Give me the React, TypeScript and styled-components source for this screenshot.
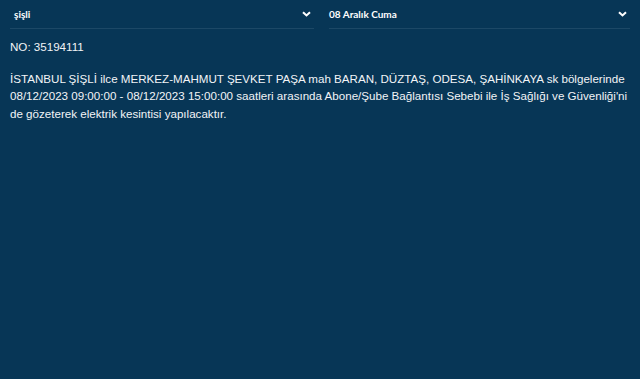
import { createGlobalStyle, styled } from "styled-components";

const GlobalStyle = createGlobalStyle`
  html, body {
    margin: 0;
    padding: 0;
    background: #073656;
  }
`;

const Page = styled.div`
  width: 640px;
  height: 379px;
  background: #073656;
  color: #f2f4f6;
  overflow: hidden;
`;

const Filters = styled.div`
  display: grid;
  grid-template-columns: 304px 301px;
  column-gap: 15px;
  padding: 0 12px 0 10px;
`;

const Select = styled.div<{ $pad: number }>`
  display: flex;
  align-items: center;
  justify-content: space-between;
  height: 28px;
  padding: 0 3px 0 ${(p) => p.$pad}px;
  border-bottom: 1px solid #1c4866;
  font-family: Lato, "Liberation Sans", sans-serif;
  font-weight: 700;
  font-size: 10px;
  color: #ffffff;
`;

const Body = styled.div`
  padding: 9px 10px 0 10px;
  font-family: "Liberation Sans", Arial, sans-serif;
  font-size: 11.6px;
  line-height: 17.5px;
  white-space: nowrap;
`;

const Number = styled.p`
  margin: 0 0 14px;
`;

const Notice = styled.p`
  margin: 0;
`;

function Chevron() {
  return (
    <svg width="9" height="6" viewBox="0 0 9 6">
      <path d="M1 1.2 L4.5 4.5 L8 1.2" fill="none" stroke="#ffffff" strokeWidth="2" />
    </svg>
  );
}

export default function App() {
  return (
    <Page>
      <GlobalStyle />
      <Filters>
        <Select $pad={4}>
          <span>şişli</span>
          <Chevron />
        </Select>
        <Select $pad={0}>
          <span>08 Aralık Cuma</span>
          <Chevron />
        </Select>
      </Filters>
      <Body>
        <Number>NO: 35194111</Number>
        <Notice>
          İSTANBUL ŞİŞLİ ilce MERKEZ-MAHMUT ŞEVKET PAŞA mah BARAN, DÜZTAŞ, ODESA, ŞAHİNKAYA sk bölgelerinde
          <br />
          08/12/2023 09:00:00 - 08/12/2023 15:00:00 saatleri arasında Abone/Şube Bağlantısı Sebebi ile İş Sağlığı ve Güvenliği'ni
          <br />
          de gözeterek elektrik kesintisi yapılacaktır.
        </Notice>
      </Body>
    </Page>
  );
}
